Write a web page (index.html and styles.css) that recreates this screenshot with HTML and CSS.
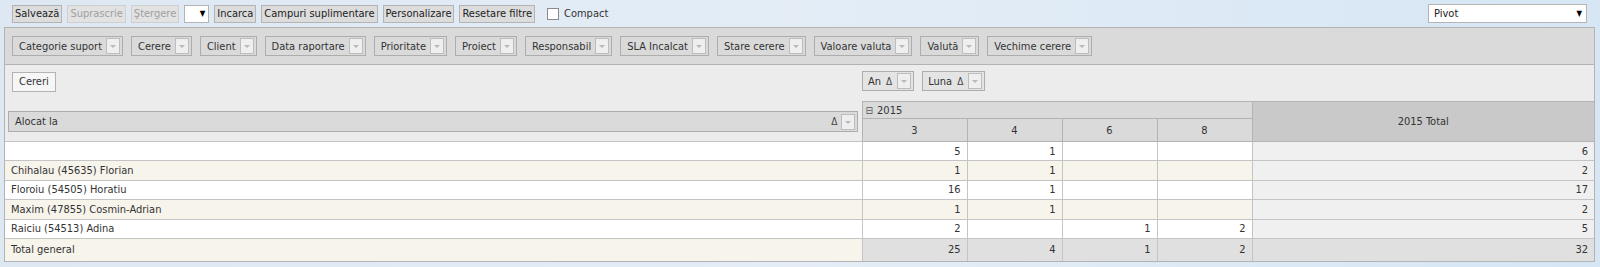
FILE: index.html
```html
<!DOCTYPE html>
<html lang="ro">
<head>
    <meta charset="UTF-8">
    <title>Cereri - Pivot</title>
    <link rel="stylesheet" href="styles.css">
</head>
<body>
    <!--bara de sus-->
    <div class="toolbar">
        <button class="btn">Salvează</button>
        <button class="btn" disabled>Suprascrie</button>
        <button class="btn" disabled>Ştergere</button>
        <span class="mini-select">▼</span>
        <button class="btn">Incarca</button>
        <button class="btn">Campuri suplimentare</button>
        <button class="btn">Personalizare</button>
        <button class="btn">Resetare filtre</button>
        <label class="check"><span class="box"></span>Compact</label>
        <span class="view-select">Pivot<span class="arrow">▼</span></span>
    </div>

    <div class="panel">
        <!--campuri de filtrare-->
        <div class="filter-area">
            <span class="field">Categorie suport<i class="drop"></i></span>
            <span class="field">Cerere<i class="drop"></i></span>
            <span class="field">Client<i class="drop"></i></span>
            <span class="field">Data raportare<i class="drop"></i></span>
            <span class="field">Prioritate<i class="drop"></i></span>
            <span class="field">Proiect<i class="drop"></i></span>
            <span class="field">Responsabil<i class="drop"></i></span>
            <span class="field">SLA Incalcat<i class="drop"></i></span>
            <span class="field">Stare cerere<i class="drop"></i></span>
            <span class="field">Valoare valuta<i class="drop"></i></span>
            <span class="field">Valută<i class="drop"></i></span>
            <span class="field">Vechime cerere<i class="drop"></i></span>
        </div>

        <table class="pivot">
            <colgroup>
                <col class="c-row">
                <col class="c-3">
                <col class="c-m">
                <col class="c-m">
                <col class="c-m">
                <col>
            </colgroup>
            <tr class="area-row">
                <td><span class="data-field">Cereri</span></td>
                <td colspan="5">
                    <div class="col-area">
                        <span class="field light">An <span class="sort">&#916;</span><i class="drop"></i></span>
                        <span class="field light">Luna <span class="sort">&#916;</span><i class="drop"></i></span>
                    </div>
                </td>
            </tr>
            <tr>
                <td rowspan="2" class="row-area">
                    <div class="row-field">Alocat la<span class="right"><span class="sort">&#916;</span><i class="drop"></i></span></div>
                </td>
                <td colspan="4" class="hdr year"><span class="collapse">&#8863;</span>2015</td>
                <td rowspan="2" class="hdr total-hdr">2015 Total</td>
            </tr>
            <tr>
                <td class="hdr num-hdr">3</td>
                <td class="hdr num-hdr">4</td>
                <td class="hdr num-hdr">6</td>
                <td class="hdr num-hdr">8</td>
            </tr>
            <tr>
                <td class="name"></td>
                <td class="v">5</td><td class="v">1</td><td class="v"></td><td class="v"></td>
                <td class="v tot">6</td>
            </tr>
            <tr class="alt">
                <td class="name">Chihalau (45635) Florian</td>
                <td class="v">1</td><td class="v">1</td><td class="v"></td><td class="v"></td>
                <td class="v tot">2</td>
            </tr>
            <tr>
                <td class="name">Floroiu (54505) Horatiu</td>
                <td class="v">16</td><td class="v">1</td><td class="v"></td><td class="v"></td>
                <td class="v tot">17</td>
            </tr>
            <tr class="alt">
                <td class="name">Maxim (47855) Cosmin-Adrian</td>
                <td class="v">1</td><td class="v">1</td><td class="v"></td><td class="v"></td>
                <td class="v tot">2</td>
            </tr>
            <tr>
                <td class="name">Raiciu (54513) Adina</td>
                <td class="v">2</td><td class="v"></td><td class="v">1</td><td class="v">2</td>
                <td class="v tot">5</td>
            </tr>
            <tr class="grand">
                <td class="name">Total general</td>
                <td class="v">25</td><td class="v">4</td><td class="v">1</td><td class="v">2</td>
                <td class="v">32</td>
            </tr>
        </table>
    </div>
</body>
</html>
```

FILE: styles.css
```css
/*stiluri pentru pagina pivot*/
body {
    margin: 0;
    height: 267px;
    background: linear-gradient(to right, #dde8f3, #e4edf6 50%, #d6e6f5);
    font-family: "DejaVu Sans Condensed", "DejaVu Sans", sans-serif;
    font-size: 11px;
    color: #333;
}

/*bara de sus*/
.toolbar {
    display: flex;
    align-items: center;
    gap: 5px;
    height: 27px;
    padding: 0 13px 0 12px;
}
.btn {
    font: inherit;
    color: #222;
    height: 18px;
    padding: 0 2px;
    background-color: #dcdcdc;
    border: 1px solid #b4b4b4;
    border-radius: 0;
}
.btn:disabled {
    color: #a0a0a0;
    border-color: #cfcfcf;
    background-color: #e2e2e2;
}
.mini-select {
    width: 20px;
    height: 16px;
    background: #fff;
    border: 1px solid #b4b4b4;
    font-size: 8px;
    text-align: right;
    line-height: 16px;
    padding-right: 3px;
    box-sizing: content-box;
    color: #000;
}
.check {
    display: flex;
    align-items: center;
    gap: 5px;
    margin-left: 7px;
}
.box {
    width: 10px;
    height: 10px;
    background: #fff;
    border: 1px solid #8a8a8a;
}
.view-select {
    margin-left: auto;
    width: 152px;
    height: 17px;
    line-height: 17px;
    padding-left: 5px;
    background: #fff;
    border: 1px solid #b4b4b4;
    color: #222;
    display: flex;
    justify-content: space-between;
}
.view-select .arrow {
    font-size: 8px;
    padding-right: 4px;
    color: #000;
}

/*panoul principal*/
.panel {
    margin: 0 5px 0 4px;
    border: 1px solid #b3b3b3;
    background-color: #ececec;
}
.filter-area {
    display: flex;
    gap: 8px;
    padding: 8px 7px;
    background-color: #dadada;
    border-bottom: 1px solid #b3b3b3;
}
.field {
    display: inline-flex;
    align-items: center;
    gap: 4px;
    height: 18px;
    padding: 0 2px 0 6px;
    border: 1px solid #adadad;
    background-color: #dadada;
    white-space: nowrap;
}
.field.light {
    background-color: #e4e4e4;
}
.drop {
    width: 12px;
    height: 14px;
    border: 1px solid #bdbdbd;
    background: #efefef;
    position: relative;
}
.drop::after {
    content: "";
    position: absolute;
    left: 3px;
    top: 6px;
    border-left: 3px solid transparent;
    border-right: 3px solid transparent;
    border-top: 3px solid #b8b8b8;
}
.sort {
    font-size: 10px;
    color: #444;
}

/*tabelul pivot*/
.pivot {
    width: 100%;
    border-collapse: collapse;
    table-layout: fixed;
}
.c-row { width: 857px; }
.c-3 { width: 105px; }
.c-m { width: 95px; }
.pivot td {
    padding: 0;
    white-space: nowrap;
}
.area-row td {
    height: 36px;
    vertical-align: top;
}
.data-field {
    display: inline-block;
    margin: 7px 0 0 7px;
    padding: 0 6px;
    height: 18px;
    line-height: 18px;
    border: 1px solid #b3b3b3;
    background: #f6f6f6;
}
.col-area {
    display: flex;
    gap: 8px;
    padding-top: 6px;
}
.col-area .field {
    padding-left: 5px;
    gap: 5px;
}
.row-area {
    vertical-align: bottom;
    padding: 0 4px 9px 3px !important;
}
.row-field {
    display: flex;
    align-items: center;
    height: 19px;
    padding-left: 6px;
    border: 1px solid #adadad;
    background: #dadada;
}
.row-field .right {
    margin-left: auto;
    display: flex;
    align-items: center;
    gap: 3px;
    padding-right: 2px;
}
.hdr {
    background-color: #dadada;
    border: 1px solid #b3b3b3;
}
.year {
    height: 16px;
    padding-left: 3px !important;
}
.collapse {
    font-size: 10px;
    margin-right: 4px;
    color: #555;
}
.num-hdr {
    height: 22px;
    text-align: center;
}
.total-hdr {
    text-align: center;
    background-color: #c9c9c9;
}
.name {
    height: 18.4px;
    padding-left: 6px !important;
    border: 1px solid #c4c4c4;
    border-left: none;
    background: #fff;
}
.v {
    text-align: right;
    padding-right: 6px !important;
    border: 1px solid #c4c4c4;
    background: #fff;
}
.alt .name,
.alt .v {
    background-color: #f7f4ec;
}
.v.tot {
    background-color: #f0f0f0;
}
.pivot tr td:last-child {
    border-right: none;
}
.grand td {
    height: 22px;
    border-bottom: none;
}
.grand .name {
    background-color: #f7f4ec;
}
.grand .v {
    background-color: #e0e0e0;
}
```
